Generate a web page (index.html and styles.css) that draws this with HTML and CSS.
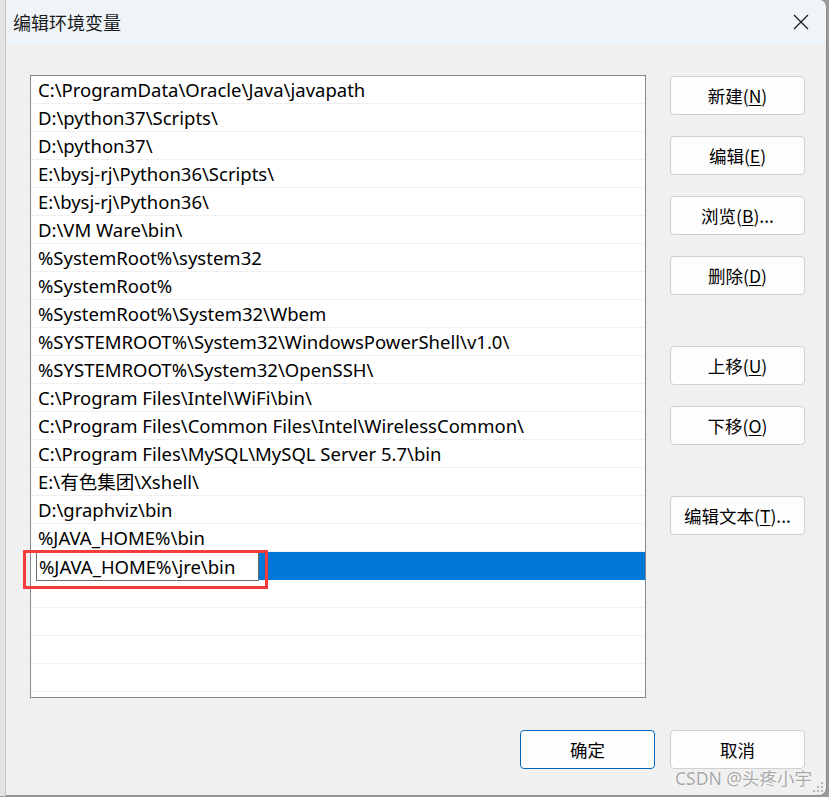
FILE: index.html
```html
<!DOCTYPE html>
<html lang="zh-CN">
<head>
    <meta charset="UTF-8">
    <title>编辑环境变量</title>
    <link rel="stylesheet" href="styles.css">
</head>
<body>
    <div class="desktop">
        <div class="behind"></div>
        <div class="dialog">
            <div class="titlebar">
                <span class="title">编辑环境变量</span>
                <button class="close-btn" title="关闭">
                    <svg width="16" height="16" viewBox="0 0 16 16"><path d="M1 1L15 15M15 1L1 15" stroke="#1a1a1a" stroke-width="1.2" fill="none"/></svg>
                </button>
            </div>
            <div class="body">
                <div class="main">
                    <div class="path-list">
                        <div class="row">C:\ProgramData\Oracle\Java\javapath</div>
                        <div class="row">D:\python37\Scripts\</div>
                        <div class="row">D:\python37\</div>
                        <div class="row">E:\bysj-rj\Python36\Scripts\</div>
                        <div class="row">E:\bysj-rj\Python36\</div>
                        <div class="row">D:\VM Ware\bin\</div>
                        <div class="row">%SystemRoot%\system32</div>
                        <div class="row">%SystemRoot%</div>
                        <div class="row">%SystemRoot%\System32\Wbem</div>
                        <div class="row">%SYSTEMROOT%\System32\WindowsPowerShell\v1.0\</div>
                        <div class="row">%SYSTEMROOT%\System32\OpenSSH\</div>
                        <div class="row">C:\Program Files\Intel\WiFi\bin\</div>
                        <div class="row">C:\Program Files\Common Files\Intel\WirelessCommon\</div>
                        <div class="row">C:\Program Files\MySQL\MySQL Server 5.7\bin</div>
                        <div class="row">E:\有色集团\Xshell\</div>
                        <div class="row">D:\graphviz\bin</div>
                        <div class="row">%JAVA_HOME%\bin</div>
                        <div class="row selected">
                            <span class="edit-wrap"><span class="edit-box">%JAVA_HOME%\jre\bin</span></span>
                        </div>
                        <div class="row"></div>
                        <div class="row"></div>
                        <div class="row"></div>
                        <div class="row"></div>
                    </div>
                    <div class="side">
                        <div class="btn-group">
                            <button class="btn">新建(<u>N</u>)</button>
                            <button class="btn">编辑(<u>E</u>)</button>
                            <button class="btn">浏览(<u>B</u>)...</button>
                            <button class="btn">删除(<u>D</u>)</button>
                        </div>
                        <div class="btn-group">
                            <button class="btn">上移(<u>U</u>)</button>
                            <button class="btn">下移(<u>O</u>)</button>
                        </div>
                        <div class="btn-group">
                            <button class="btn">编辑文本(<u>T</u>)...</button>
                        </div>
                    </div>
                </div>
                <div class="footer">
                    <button class="btn primary">确定</button>
                    <button class="btn">取消</button>
                </div>
            </div>
            <div class="mark"></div>
            <div class="watermark">CSDN @头疼小宇</div>
            <svg class="grip" width="10" height="10" viewBox="0 0 10 10">
                <rect x="8" y="0" width="2" height="2" fill="#b8b8b8"/>
                <rect x="4" y="4" width="2" height="2" fill="#b8b8b8"/>
                <rect x="8" y="4" width="2" height="2" fill="#b8b8b8"/>
                <rect x="0" y="8" width="2" height="2" fill="#b8b8b8"/>
                <rect x="4" y="8" width="2" height="2" fill="#b8b8b8"/>
                <rect x="8" y="8" width="2" height="2" fill="#b8b8b8"/>
            </svg>
        </div>
    </div>
</body>
</html>
```

FILE: styles.css
```css
* {
    margin: 0;
    padding: 0;
    box-sizing: border-box;
}

body {
    font-family: "Noto Sans", "Noto Sans CJK SC", sans-serif;
    background: #9a9a9a;
    width: 829px;
    height: 797px;
    overflow: hidden;
}

.desktop {
    display: flex;
    height: 796px;
}

.behind {
    width: 6px;
    background: #e4e4e4;
    border-right: 1px solid #c8c8c8;
}

.dialog {
    position: relative;
    width: 821px;
    height: 796px;
    background: #f0f0f0;
    border-top-right-radius: 8px;
    border-bottom-right-radius: 8px;
    border-right: 1px solid #8c8c8c;
    border-bottom: 1px solid #8c8c8c;
    overflow: hidden;
    display: flex;
    flex-direction: column;
}

.titlebar {
    height: 44px;
    background: #eff4f9;
    display: flex;
    align-items: center;
    justify-content: space-between;
    padding-left: 7px;
}

.title {
    font-size: 18px;
    color: #1a1a1a;
    font-family: "Noto Sans CJK SC", sans-serif;
}

.close-btn {
    width: 46px;
    height: 44px;
    border: none;
    background: none;
    display: flex;
    align-items: center;
    justify-content: center;
    margin-right: 2px;
}

.body {
    flex: 1;
    padding: 31px 21px 0 24px;
    display: flex;
    flex-direction: column;
}

.main {
    display: flex;
    gap: 24px;
}

.path-list {
    width: 616px;
    height: 623px;
    background: #fff;
    border: 1px solid #828790;
    overflow: hidden;
}

.row {
    height: 28px;
    line-height: 27px;
    padding-left: 7px;
    font-size: 18.5px;
    color: #000;
    border-bottom: 1px solid #f0f0f0;
    white-space: nowrap;
}

.row.selected {
    background: #0078d7;
    padding-left: 0;
    border-bottom-color: #0078d7;
    overflow: visible;
}

.edit-wrap {
    display: inline-block;
    height: 29px;
    padding-left: 5px;
    background: #fff;
    vertical-align: top;
}

.edit-box {
    display: inline-block;
    width: 223px;
    height: 29px;
    line-height: 27px;
    padding-left: 2px;
    border: 1px solid #6e6e6e;
    background: #fff;
}

.mark {
    position: absolute;
    left: 17px;
    top: 550px;
    width: 245px;
    height: 39px;
    border: 3px solid #f53b3b;
}

.side {
    display: flex;
    flex-direction: column;
    gap: 51px;
    padding-top: 1px;
}

.btn-group {
    display: flex;
    flex-direction: column;
    gap: 21px;
}

.btn {
    width: 135px;
    height: 39px;
    background: #fdfdfd;
    border: 1px solid #d0d0d0;
    border-radius: 4px;
    font-family: "Noto Sans CJK SC", sans-serif;
    font-size: 17.5px;
    color: #000;
}

.btn u {
    text-decoration-thickness: 1px;
    text-underline-offset: 2px;
}

.btn.primary {
    border-color: #0067c0;
}

.footer {
    display: flex;
    justify-content: flex-end;
    gap: 15px;
    margin-top: 32px;
}

.watermark {
    position: absolute;
    right: 14px;
    bottom: 5px;
    font-size: 17.5px;
    color: #a8a8a8;
    font-family: "Noto Sans", "Noto Sans CJK SC", sans-serif;
    text-shadow: 0 0 2px #fff, 0 0 1px #fff;
}

.grip {
    position: absolute;
    right: 3px;
    bottom: 3px;
}
```
